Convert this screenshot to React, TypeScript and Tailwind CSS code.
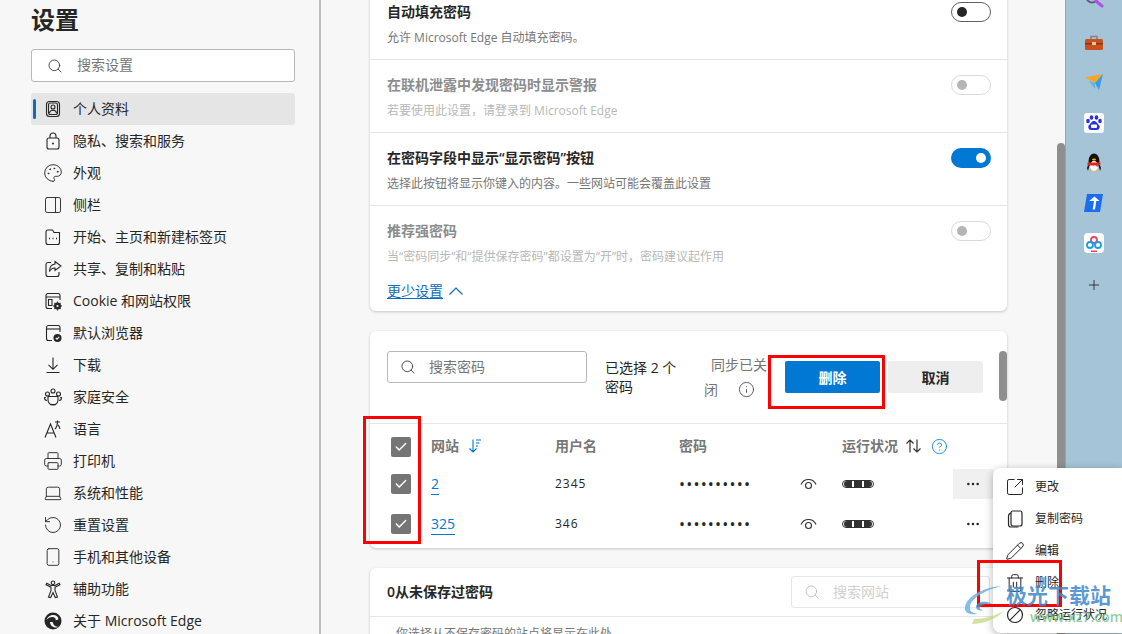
import React from 'react';
import { Ellipsis, Palette, PanelRight, Pencil, Plus, Printer, RotateCcw, Search, Smartphone, SquareArrowOutUpRight, Trash2, Check, Laptop, Info, CircleHelp } from 'lucide-react';

const ic = { width: 20, height: 20, viewBox: '0 0 20 20', fill: 'none', stroke: '#262626', strokeWidth: 1.1 };

function ProfileIcon() {
  return (
    <svg {...ic}>
      <rect x="3.5" y="2.5" width="13" height="15" rx="3" />
      <rect x="5.5" y="4" width="9" height="11.5" rx="2" />
      <circle cx="10" cy="8" r="2" />
      <path d="M6.5 14c.4-2 1.8-2.8 3.5-2.8s3.100.8 3.500 2.800" />
    </svg>
  );
}
function LockIcon() {
  return (
    <svg {...ic}>
      <rect x="4" y="7" width="12" height="11" rx="2" />
      <path d="M7 7V5a3 3 0 0 1 6 0v2" />
      <circle cx="10" cy="12.500" r="1" fill="#262626" stroke="none" />
    </svg>
  );
}
function HomeTabIcon() {
  return (
    <svg {...ic}>
      <path d="M5 3h4.500l1.500 2.500h5.500V15.500a2 2 0 0 1-2 2H5a2 2 0 0 1-2-2V5a2 2 0 0 1 2-2z" />
      <path d="M6 11.500h1M9.500 11.500h1M13 11.500h1" strokeWidth="1.500" />
    </svg>
  );
}
function ShareIcon() {
  return (
    <svg {...ic}>
      <path d="M8 3.500H5a2 2 0 0 0-2 2v10a2 2 0 0 0 2 2h9a2 2 0 0 0 2-2v-2.500" />
      <path d="M12 2.500l6 4.500-6 4.500V9c-3 0-4.500 1.500-5.500 3.500C6.500 8.500 8.500 5.500 12 5z" />
    </svg>
  );
}
function CookieIcon() {
  return (
    <svg {...ic}>
      <path d="M9 17.500H5a2 2 0 0 1-2-2v-11a2 2 0 0 1 2-2h10a2 2 0 0 1 2 2V9" />
      <path d="M3 6h14M5.500 8.500h3.500v6H5.500z" />
      <circle cx="14.500" cy="15" r="3.500" fill="#262626" stroke="none" />
      <circle cx="14.500" cy="15" r="1.100" fill="#f7f7f7" stroke="none" />
      <path d="M14.500 10.500v9M10 15h9M11.500 12l6 6M17.500 12l-6 6" stroke="#262626" strokeWidth="1.200" strokeDasharray="1.300 6.400" />
    </svg>
  );
}
function DefaultBrowserIcon() {
  return (
    <svg {...ic}>
      <path d="M9 17.500H5.500a2 2 0 0 1-2-2v-11a2 2 0 0 1 2-2h9.500a2 2 0 0 1 2 2V9" />
      <path d="M3.500 6h13.500" />
      <circle cx="14.500" cy="15" r="4" fill="#262626" stroke="none" />
      <path d="M12.800 15l1.200 1.200 2.200-2.400" stroke="#f7f7f7" />
    </svg>
  );
}
function DownloadIcon() {
  return (
    <svg {...ic}>
      <path d="M10 2.500v11.500M5.500 9.800l4.500 4.500 4.500-4.500M3.500 17.500h13" />
    </svg>
  );
}
function FamilyIcon() {
  return (
    <svg {...ic}>
      <circle cx="4.500" cy="7" r="2" />
      <circle cx="10" cy="4" r="2" />
      <circle cx="15.500" cy="7" r="2" />
      <path d="M2.800 10.500H1.500c0 2 1 3 2.500 3M17.200 10.500h1.300c0 2-1 3-2.500 3" />
      <path d="M5 9.500h10v3.500a5 5 0 0 1-10 0z" />
      <path d="M7 17.500h6" />
    </svg>
  );
}
function LanguageIcon() {
  return (
    <svg {...ic}>
      <path d="M2 18.500L7.500 5l5.500 13.500M4 14h7" />
      <path d="M12 3h5M14.500 1.500c0 4-.7 7-2.500 8.500M15 6c1 .8 1.600 2.200 2 4" />
    </svg>
  );
}
function AccessIcon() {
  return (
    <svg {...ic}>
      <circle cx="10" cy="3.800" r="1.800" />
      <path d="M3 5.800l5 2.400v3.300l-2.500 6.500 2.200.500L10 13.500l2.300 5 2.200-.500-2.500-6.500V8.200l5-2.400-.8-1.500L12 6.500H8L3.800 4.300z" />
    </svg>
  );
}
function EdgeIcon() {
  return (
    <svg width="20" height="20" viewBox="0 0 20 20">
      <circle cx="10" cy="10" r="8.500" fill="#262626" />
      <path d="M3.500 9c1-3.500 4-5 6.800-5 3 0 5 1.800 5 3.800 0 1-1 1.400-2.500 1.400 0-2-1.500-3.200-3.300-3.200C7 6 4.800 7 3.500 9z" fill="#f7f7f7" />
      <path d="M7 11c0 3 2.500 5.500 6 5.500 1 0 2-.2 3-.8-2.500.3-5.500-.5-6.300-4.700z" fill="#f7f7f7" />
    </svg>
  );
}
function CopyPageIcon() {
  return (
    <svg {...ic} strokeWidth={1.200}>
      <rect x="6" y="2" width="11" height="15" rx="2" />
      <path d="M6 4.200C4.500 4.500 3.500 5.500 3.500 7v8.500c0 1.500 1 2.500 2.500 2.500h7.500" />
    </svg>
  );
}
function NoEntryIcon() {
  return (
    <svg {...ic} strokeWidth={1.200}>
      <circle cx="10" cy="10" r="7.500" />
      <path d="M4.700 15.300L15.300 4.700" />
    </svg>
  );
}
function RevealIcon() {
  return (
    <svg width="17" height="14" viewBox="0 0 17 14" fill="none" stroke="#333" strokeWidth="1.100">
      <path d="M1 7.500C2.500 4 5.200 2.500 8.500 2.500S14.500 4 16 7.500" />
      <circle cx="8.500" cy="8.500" r="3" />
    </svg>
  );
}

const navItems: [React.ReactNode, string][] = [
  [<ProfileIcon />, '个人资料'],
  [<LockIcon />, '隐私、搜索和服务'],
  [<Palette size={20} strokeWidth={1.100} color="#262626" />, '外观'],
  [<PanelRight size={20} strokeWidth={1.100} color="#262626" />, '侧栏'],
  [<HomeTabIcon />, '开始、主页和新建标签页'],
  [<ShareIcon />, '共享、复制和粘贴'],
  [<CookieIcon />, 'Cookie 和网站权限'],
  [<DefaultBrowserIcon />, '默认浏览器'],
  [<DownloadIcon />, '下载'],
  [<FamilyIcon />, '家庭安全'],
  [<LanguageIcon />, '语言'],
  [<Printer size={20} strokeWidth={1.100} color="#262626" />, '打印机'],
  [<Laptop size={20} strokeWidth={1.100} color="#262626" />, '系统和性能'],
  [<RotateCcw size={20} strokeWidth={1.100} color="#262626" />, '重置设置'],
  [<Smartphone size={20} strokeWidth={1.100} color="#262626" />, '手机和其他设备'],
  [<AccessIcon />, '辅助功能'],
  [<EdgeIcon />, '关于 Microsoft Edge'],
];

function Sidebar() {
  return (
    <aside className="w-[321px] shrink-0 h-full border-r-2 border-[#bdbdbd] pl-[31px] pr-[25px] bg-[#f7f7f7]">
      <h1 className="h-[49px] pt-[2px] text-[24px] leading-[36px] font-bold text-[#262626]">设置</h1>
      <div className="h-[33px] w-[264px] bg-white border border-[#b8b8b8] rounded-[3px] flex items-center pl-[15px] gap-[14px] text-[14px] text-[#767676]">
        <Search size={16} strokeWidth={1.300} color="#333" />
        <span className="pb-[2px]">搜索设置</span>
      </div>
      <nav className="mt-[11px] w-[264px]">
        {navItems.map(([icon, label], i) => (
          <div key={label} className={`relative h-[32px] flex items-center pl-[12px] gap-[10px] text-[14px] text-[#262626] rounded-[3px] ${i === 0 ? 'bg-[#e5e5e5]' : ''}`}>
            {i === 0 && <span className="absolute left-[2px] top-[6px] h-[20px] w-[3px] rounded-full bg-[#0f6cbd]" />}
            <span className="w-[20px] h-[20px] flex items-center justify-center">{icon}</span>
            <span className="pb-[2px]">{label}</span>
          </div>
        ))}
      </nav>
    </aside>
  );
}

function Toggle({ state }: { state: 'off' | 'on' | 'disabled' }) {
  if (state === 'on') {
    return (
      <span className="w-[40px] h-[20px] rounded-full bg-[#0078d4] flex items-center justify-end pr-[5px] shrink-0">
        <span className="w-[10px] h-[10px] rounded-full bg-white" />
      </span>
    );
  }
  const off = state === 'off';
  return (
    <span className={`w-[40px] h-[20px] rounded-full border bg-white flex items-center pl-[5px] shrink-0 ${off ? 'border-[#616161]' : 'border-[#d9d9d9]'}`}>
      <span className={`w-[10px] h-[10px] rounded-full ${off ? 'bg-[#262626]' : 'bg-[#b5b5b5]'}`} />
    </span>
  );
}

function SettingRow({ title, desc, state, border = true }: { title: string; desc: string; state: 'off' | 'on' | 'disabled'; border?: boolean }) {
  const disabled = state === 'disabled';
  return (
    <div className={`h-[73px] pl-[17px] pr-[16px] pt-[15px] flex justify-between ${border ? 'border-b border-[#e6e6e6]' : ''}`}>
      <div>
        <div className={`text-[14px] leading-[20px] font-semibold ${disabled ? 'text-[#8c8c8c]' : 'text-[#262626]'}`}>{title}</div>
        <div className={`mt-[6px] text-[12px] leading-[20px] ${disabled ? 'text-[#b8b8b8]' : 'text-[#767676]'}`}>{desc}</div>
      </div>
      <Toggle state={state} />
    </div>
  );
}

function Checkbox() {
  return (
    <span className="w-[20px] h-[20px] rounded-[2px] bg-[#757575] flex items-center justify-center shrink-0">
      <Check size={14} strokeWidth={2.600} color="#fff" />
    </span>
  );
}

function HealthBar() {
  return (
    <span className="w-[32px] h-[8px] rounded-full border border-[#333] flex items-center gap-[2px] px-[1px] bg-white">
      <span className="flex-1 h-[6px] rounded-l-full bg-[#333]" />
      <span className="flex-1 h-[6px] bg-[#333]" />
      <span className="flex-1 h-[6px] rounded-r-full bg-[#333]" />
    </span>
  );
}

function PasswordRow({ site, user, hover }: { site: string; user: string; hover?: boolean }) {
  return (
    <div className="h-[40px] pl-[21px] flex items-center">
      <Checkbox />
      <span className="ml-[20px] w-[124px] text-[14px] text-[#0078d4] pb-[2px]">
        <span className="border-b border-[#0078d4] pb-[1px]">{site}</span>
      </span>
      <span className="w-[124px] text-[12px] tracking-[1px] text-[#262626]">{user}</span>
      <span className="w-[121px] text-[16px] leading-none tracking-[1.200px] text-[#262626]">••••••••••</span>
      <RevealIcon />
      <span className="ml-[25px]"><HealthBar /></span>
      <span className={`ml-[79px] w-[40px] h-[30px] flex items-center justify-center ${hover ? 'bg-[#f0f0f0]' : ''}`}>
        <Ellipsis size={16} strokeWidth={1.800} color="#262626" />
      </span>
    </div>
  );
}

function PasswordCard() {
  return (
    <section className="relative mt-[20px] h-[217px] bg-white rounded-[6px] shadow-[0_1px_3px_rgba(0,0,0,0.2)]">
      <div className="h-[93px] border-b border-[#e6e6e6] pl-[17px] pt-[20px] flex items-start">
        <div className="w-[200px] h-[32px] border border-[#b8b8b8] rounded-[3px] flex items-center pl-[12px] gap-[13px] text-[14px] text-[#767676]">
          <Search size={16} strokeWidth={1.300} color="#333" />
          <span className="pb-[2px]">搜索密码</span>
        </div>
        <div className="ml-[18px] mt-[7px] w-[86px] text-[14px] leading-[19px] text-[#262626]">已选择 2 个 密码</div>
        <div className="ml-[13px] mt-[4px] w-[72px] text-[14px] text-[#767676]">
          <div className="leading-[20px] pl-[7px] whitespace-nowrap">同步已关</div>
          <div className="mt-[4px] flex items-center gap-[20px] whitespace-nowrap">
            <span>闭</span>
            <Info size={17} strokeWidth={1.100} color="#333" />
          </div>
        </div>
        <button className="ml-[9px] mt-[10px] w-[95px] h-[32px] rounded-[2px] bg-[#0078d4] text-white text-[14px] font-semibold">删除</button>
        <button className="ml-[8px] mt-[10px] w-[95px] h-[32px] rounded-[2px] bg-[#eeeeee] text-[#262626] text-[14px] font-semibold">取消</button>
      </div>
      <div className="h-[40px] pl-[21px] pt-[13px] flex items-start text-[14px] leading-[18px] font-semibold text-[#767676]">
        <Checkbox />
        <span className="ml-[20px] w-[124px] flex items-center gap-[9px]">
          网站
          <svg width="14" height="16" viewBox="0 0 14 16" fill="none" stroke="#0078d4" strokeWidth="1.100"><path d="M5 1.500v12.500M1.500 10.500L5 14l3.500-3.500M8 2h5M8 5h3.500M8 8h2" /></svg>
        </span>
        <span className="w-[124px]">用户名</span>
        <span className="w-[163px]">密码</span>
        <span className="flex items-center">
          运行状况
          <svg className="ml-[8px]" width="15" height="14" viewBox="0 0 15 14" fill="none" stroke="#333" strokeWidth="1.200"><path d="M4 13.500V1M.5 4.500L4 1l3.500 3.500M11 .5V13M7.500 9.500L11 13l3.500-3.500" /></svg>
          <CircleHelp size={17} strokeWidth={1.200} color="#0078d4" className="ml-[10px]" />
        </span>
      </div>
      <PasswordRow site="2" user="2345" hover />
      <PasswordRow site="325" user="346" />
      <span className="absolute right-0 top-[20px] w-[8px] h-[50px] rounded-full bg-[#8f8f8f]" />
    </section>
  );
}

function NeverSavedCard() {
  return (
    <section className="mt-[20px] h-[140px] bg-white rounded-[6px] shadow-[0_1px_3px_rgba(0,0,0,0.2)]">
      <div className="h-[49px] border-b border-[#e6e6e6] pl-[17px] pr-[17px] flex items-center justify-between">
        <span className="pb-[2px] text-[14px] font-semibold text-[#262626]">0从未保存过密码</span>
        <span className="w-[199px] h-[32px] border border-[#e6e6e6] rounded-[3px] flex items-center pl-[12px] gap-[13px] text-[14px] text-[#d0d0d0]">
          <Search size={16} strokeWidth={1.300} color="#b8b8b8" />
          <span className="pb-[2px]">搜索网站</span>
        </span>
      </div>
      <div className="pl-[26px] pt-[7px] text-[12px] leading-[20px] text-[#767676]">你选择从不保存密码的站点将显示在此处</div>
    </section>
  );
}

const menuItems: [React.ReactNode, string][] = [
  [<SquareArrowOutUpRight size={20} strokeWidth={1.200} color="#262626" />, '更改'],
  [<CopyPageIcon />, '复制密码'],
  [<Pencil size={20} strokeWidth={1.200} color="#262626" />, '编辑'],
  [<Trash2 size={20} strokeWidth={1.200} color="#262626" />, '删除'],
  [<NoEntryIcon />, '忽略运行状况'],
];

function RowMenu() {
  return (
    <div className="absolute left-[993px] top-[468px] w-[129px] h-[165px] pt-[3px] bg-white rounded-l-[8px] shadow-[0_2px_8px_rgba(0,0,0,0.3)]">
      {menuItems.map(([icon, label]) => (
        <div key={label} className="h-[32px] pl-[12px] flex items-center gap-[10px] text-[12px] text-[#262626] whitespace-nowrap">
          {icon}
          {label}
        </div>
      ))}
    </div>
  );
}

function Rail() {
  return (
    <div className="w-[57px] shrink-0 h-full bg-[#a5c4d8] border-l border-[#8ba8ba] flex flex-col items-center overflow-hidden">
      <svg className="shrink-0 -mt-[11px]" width="20" height="20" viewBox="0 0 20 20" fill="none">
        <circle cx="8" cy="8" r="5.500" stroke="#5b5b7a" strokeWidth="2" />
        <path d="M12 12l6 5" stroke="#b44fe0" strokeWidth="3" strokeLinecap="round" />
      </svg>
      <svg className="shrink-0 mt-[24px]" width="20" height="20" viewBox="0 0 20 20">
        <path d="M7 6V3.500h6V6" fill="none" stroke="#8a7f78" strokeWidth="1.500" />
        <rect x="1" y="6" width="18" height="11" rx="1.500" fill="#c9501f" />
        <rect x="1" y="10" width="18" height="1.500" fill="#8f3412" />
        <rect x="8" y="9" width="4" height="3" fill="#e9c9a0" />
      </svg>
      <svg className="shrink-0 mt-[20px]" width="20" height="20" viewBox="0 0 20 20">
        <path d="M1 4.500L19 1 11 10z" fill="#f5a623" />
        <path d="M19 1l-4 16-4-7z" fill="#3b9ae8" />
        <path d="M5 8l6 2v6z" fill="#5eb4f0" />
      </svg>
      <svg className="shrink-0 mt-[20px] rounded-[3px] bg-white" width="20" height="20" viewBox="0 0 20 20" fill="#2932e1">
        <ellipse cx="4" cy="8" rx="1.800" ry="2.300" />
        <ellipse cx="7.500" cy="4.500" rx="1.800" ry="2.300" />
        <ellipse cx="12.500" cy="4.500" rx="1.800" ry="2.300" />
        <ellipse cx="16" cy="8" rx="1.800" ry="2.300" />
        <path d="M10 8c2.500 0 3 2.500 5 4 1.500 1.500.5 5-2 5H7c-2.500 0-3.500-3.500-2-5 2-1.500 2.500-4 5-4z" />
        <rect x="7" y="11.500" width="6" height="3.500" rx="1" fill="#fff" />
      </svg>
      <svg className="shrink-0 mt-[20px]" width="20" height="20" viewBox="0 0 20 20">
        <ellipse cx="10" cy="8" rx="5.500" ry="7.500" fill="#111" />
        <path d="M3 15c1-3 2-4 3-5l-2 8zM17 15c-1-3-2-4-3-5l2 8z" fill="#111" />
        <ellipse cx="10" cy="13" rx="4" ry="5" fill="#fff" />
        <path d="M3.500 9.500h13v2l-3 1v2l-1.500-2H3.500z" fill="#e1251b" />
        <ellipse cx="10" cy="6.500" rx="2" ry="1" fill="#f5b400" />
        <path d="M5 18.500h4l-2-1.500zM11 18.500h4l-2-1.500z" fill="#f5b400" />
      </svg>
      <svg className="shrink-0 mt-[20px]" width="20" height="20" viewBox="0 0 20 20">
        <path d="M3 1h16l-3 18H0z" fill="#1f6bf0" />
        <path d="M10.500 3.500l5 4.500h-3.200l-1.300 8.500H8.700L10 8H5.200z" fill="#fff" />
      </svg>
      <svg className="shrink-0 mt-[20px] rounded-[4px] bg-white" width="20" height="20" viewBox="0 0 20 20" fill="none" strokeWidth="1.800">
        <circle cx="10" cy="7" r="3" stroke="#e8475a" />
        <circle cx="6" cy="12" r="3" stroke="#1b9be8" />
        <circle cx="14" cy="12" r="3" stroke="#1b9be8" />
        <rect x="7" y="17.500" width="6" height="1.500" fill="#e8475a" stroke="none" />
      </svg>
      <Plus className="shrink-0 mt-[24px]" size={16} strokeWidth={1.200} color="#1a1a1a" />
    </div>
  );
}

function Watermark() {
  return (
    <div className="absolute left-[962px] top-[582px] h-[46px] w-[160px] flex pointer-events-none">
      <svg className="shrink-0 mt-[2px]" width="46" height="42" viewBox="0 0 46 42" fill="none">
        <path d="M40 2C22 3 5 12 3 23c-1 7 7 8 13 7-6-1-9-3-8-8C10 13 24 6 40 2z" fill="#6fb1e4" fillOpacity="0.85" />
        <path d="M30 20c-6-4-16-2-16 3 0 3 4 4 8 3-3 0-5-1-4-3 1-2 7-4 12-3z" fill="#4d8ec9" fillOpacity="0.8" />
        <path d="M10 40c12 0 24-5 32-13-9 5-20 8-30 8z" fill="#c7dc8a" fillOpacity="0.8" />
      </svg>
      <div className="flex flex-col items-start -ml-[2px]">
        <span className="text-[21px] leading-[26px] font-bold text-[#3f86c9]/85 whitespace-nowrap">极光下载站</span>
        <span className="ml-[24px] text-[14px] leading-[18px] font-semibold text-[#6cbd7e]/75 whitespace-nowrap">www.xz7.com</span>
      </div>
    </div>
  );
}

export default function App() {
  return (
    <div className="relative flex w-[1122px] h-[634px] overflow-hidden bg-[#f7f7f7] font-['Open_Sans','Noto_Sans_CJK_SC',sans-serif]">
      <Sidebar />
      <main className="flex-1 h-full overflow-hidden">
        <div className="ml-[49px] w-[637px] -mt-[13px]">
          <section className="h-[324px] bg-white rounded-[6px] shadow-[0_1px_3px_rgba(0,0,0,0.2)]">
            <SettingRow title="自动填充密码" desc="允许 Microsoft Edge 自动填充密码。" state="off" />
            <SettingRow title="在联机泄露中发现密码时显示警报" desc="若要使用此设置，请登录到 Microsoft Edge" state="disabled" />
            <SettingRow title="在密码字段中显示“显示密码”按钮" desc="选择此按钮将显示你键入的内容。一些网站可能会覆盖此设置" state="on" />
            <SettingRow title="推荐强密码" desc="当“密码同步”和“提供保存密码”都设置为“开”时，密码建议起作用" state="disabled" border={false} />
            <div className="pl-[17px] pt-[1px] flex items-center gap-[6px] text-[14px] text-[#0f6cbd]">
              <span className="underline underline-offset-2">更少设置</span>
              <svg width="14" height="8" viewBox="0 0 14 8" fill="none" stroke="#0f6cbd" strokeWidth="1.200"><path d="M.5 7.500L7 1l6.500 6.500" /></svg>
            </div>
          </section>
          <PasswordCard />
          <NeverSavedCard />
        </div>
      </main>
      <div className="w-[8px] shrink-0 h-full pt-[143px] bg-[#f7f7f7]">
        <div className="h-full rounded-t-full bg-[#8f8f8f]" />
      </div>
      <Rail />
      <RowMenu />
      <span className="absolute left-[768px] top-[355px] w-[117px] h-[54px] border-[3px] border-[#ff0000]" />
      <span className="absolute left-[363px] top-[416px] w-[58px] h-[128px] border-[3px] border-[#ff0000]" />
      <span className="absolute left-[977px] top-[560px] w-[85px] h-[47px] border-[3px] border-[#ff0000]" />
      <Watermark />
    </div>
  );
}
